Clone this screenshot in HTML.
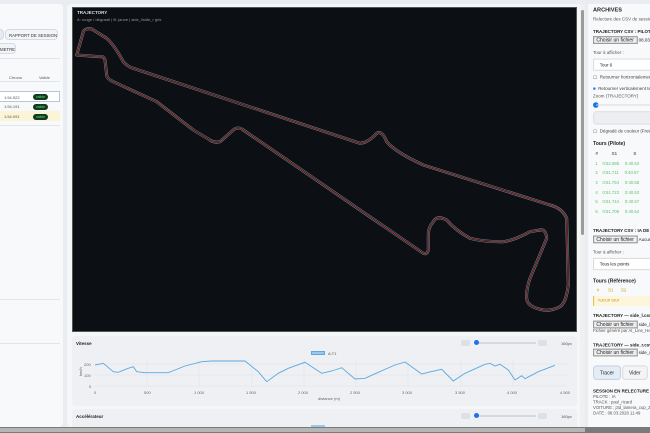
<!DOCTYPE html>
<html><head><meta charset="utf-8"><style>
*{margin:0;padding:0;box-sizing:border-box}
body{width:650px;height:433px;overflow:hidden;background:#e9ecf0;font-family:"Liberation Sans",sans-serif;position:relative;color:#222}
.abs{position:absolute}
.t{font-size:4.5px;color:#555}
.b{font-weight:bold;color:#222}
.btn{position:absolute;border:1px solid #d5d9e0;border-radius:4px;background:#f2f4f7;font-size:4.3px;color:#333;padding:3px 3px;white-space:nowrap}
.badge{position:absolute;left:33px;width:15px;height:6px;border-radius:3px;background:#123a1e;color:#5fdc7a;font-size:3.5px;text-align:center;line-height:6px}
</style></head><body>
<div class="abs" style="left:0;top:4px;width:63px;height:423px;background:#f8f9fb;border-radius:0 4px 4px 0"></div>
<div class="btn" style="left:-4px;top:29px;width:7px;height:11px;background:#e6ecf5"></div>
<div class="btn" style="left:5px;top:29px;width:53px;height:11px">RAPPORT DE SESSION</div>
<div class="btn" style="left:-4px;top:43px;width:20px;height:11px">METRE</div>
<div class="abs" style="left:0;top:58px;width:60px;height:1px;background:#e2e5ea"></div>
<div class="abs t" style="left:9px;top:75px;font-size:4px">Chrono</div>
<div class="abs t" style="left:39px;top:75px;font-size:4px">Valide</div>
<div class="abs" style="left:0;top:81px;width:60px;height:1px;background:#e2e5ea"></div>
<div class="abs" style="left:-2px;top:91px;width:62px;height:11px;border:1px solid #b8c6d8;background:#fff"></div>
<div class="abs" style="left:0;top:111px;width:60px;height:10px;background:#fbf5d8"></div>
<div class="abs t" style="left:4px;top:95px;font-size:4px">1:54.522</div>
<div class="abs t" style="left:4px;top:104px;font-size:4px">1:54.191</div>
<div class="abs t" style="left:4px;top:114px;font-size:4px">1:54.091</div>
<div class="badge" style="top:94px">valide</div>
<div class="badge" style="top:104px">valide</div>
<div class="badge" style="top:114px">valide</div>
<div class="abs" style="left:0;top:125px;width:60px;height:1px;background:#e2e5ea"></div>
<div class="abs" style="left:0;top:299px;width:60px;height:1px;background:#e2e5ea"></div>
<div class="abs" style="left:0;top:343px;width:60px;height:1px;background:#e2e5ea"></div>
<div class="abs" style="left:67px;top:4px;width:518px;height:423px;background:#f4f6f8;border-radius:4px"></div>
<div class="abs" style="left:72px;top:7px;width:505px;height:325px;background:#0c0f14;border:1px solid #555"></div>
<div class="abs" style="left:77px;top:10px;font-size:4.5px;color:#ddd;font-weight:bold">TRAJECTORY</div>
<div class="abs" style="left:77px;top:17px;font-size:4px;color:#999">A: rouge / dégradé | B: jaune | side_l/side_r gris</div>
<svg class="abs" style="left:0;top:0" width="650" height="433">
<g fill="none" stroke-linejoin="round" stroke-linecap="round">
<path d="M76.7,55 L83.3,31.7 Q85,28 91.7,29 L106.7,38.3 Q115,46 123.3,61.7 Q128,67 133.3,68.3 L360,143.3 Q368,143 376.7,133.3 Q382,130 386.7,141.7 Q395,152 423.3,165 L550,205 Q562,208 566.7,218.3 L568.3,285 Q566,303 560,306.7 Q552,311 543.3,310 Q527,307 526.7,298.3 Q526,290 530,278.3 L546.7,238.3 Q546,229 540,230 L530,231.7 Q515,240 503.3,241.7 Q485,242 470,238.3 Q455,230 446.7,220 Q437,215 433.3,221.7 Q428,228 428.3,235 L428.3,250 Q427,255 423.3,253.3 L243.3,130 Q238,126 233.3,130 L220,141.7 Q214,143 210,140 L193.3,130 L156.7,101.7 L113.3,81.7 Q107,79 106.7,75 L105,60 Q104,56 100,56.7 Z" stroke="#7d828c" stroke-width="3"/>
<path d="M76.7,55 L83.3,31.7 Q85,28 91.7,29 L106.7,38.3 Q115,46 123.3,61.7 Q128,67 133.3,68.3 L360,143.3 Q368,143 376.7,133.3 Q382,130 386.7,141.7 Q395,152 423.3,165 L550,205 Q562,208 566.7,218.3 L568.3,285 Q566,303 560,306.7 Q552,311 543.3,310 Q527,307 526.7,298.3 Q526,290 530,278.3 L546.7,238.3 Q546,229 540,230 L530,231.7 Q515,240 503.3,241.7 Q485,242 470,238.3 Q455,230 446.7,220 Q437,215 433.3,221.7 Q428,228 428.3,235 L428.3,250 Q427,255 423.3,253.3 L243.3,130 Q238,126 233.3,130 L220,141.7 Q214,143 210,140 L193.3,130 L156.7,101.7 L113.3,81.7 Q107,79 106.7,75 L105,60 Q104,56 100,56.7 Z" stroke="#0c0f14" stroke-width="1.9"/>
<path d="M76.7,55 L83.3,31.7 Q85,28 91.7,29 L106.7,38.3 Q115,46 123.3,61.7 Q128,67 133.3,68.3 L360,143.3 Q368,143 376.7,133.3 Q382,130 386.7,141.7 Q395,152 423.3,165 L550,205 Q562,208 566.7,218.3 L568.3,285 Q566,303 560,306.7 Q552,311 543.3,310 Q527,307 526.7,298.3 Q526,290 530,278.3 L546.7,238.3 Q546,229 540,230 L530,231.7 Q515,240 503.3,241.7 Q485,242 470,238.3 Q455,230 446.7,220 Q437,215 433.3,221.7 Q428,228 428.3,235 L428.3,250 Q427,255 423.3,253.3 L243.3,130 Q238,126 233.3,130 L220,141.7 Q214,143 210,140 L193.3,130 L156.7,101.7 L113.3,81.7 Q107,79 106.7,75 L105,60 Q104,56 100,56.7 Z" stroke="#c0443e" stroke-width="0.7"/>
</g>
</svg>
<div class="abs" style="left:72px;top:336px;width:505px;height:70px;background:#eef0f3;border-radius:4px"></div>
<div class="abs b" style="left:76px;top:341px;font-size:4.5px">Vitesse</div>
<div class="abs" style="left:461px;top:340px;width:9px;height:6px;background:#dde0e5;border-radius:2px"></div>
<div class="abs" style="left:538px;top:340px;width:9px;height:6px;background:#dde0e5;border-radius:2px"></div>
<div class="abs" style="left:476px;top:342px;width:60px;height:2px;background:#d5d8de"></div>
<div class="abs" style="left:474px;top:340px;width:5px;height:5px;border-radius:50%;background:#1a73e8"></div>
<div class="abs t" style="left:561px;top:341px;font-size:4px">160px</div>
<div class="abs" style="left:311px;top:351px;width:14px;height:4px;background:#9cc8ec;border:1px solid #5aa9e6"></div>
<div class="abs t" style="left:328px;top:351px;font-size:4px">A:T1</div>
<div class="abs" style="left:72px;top:409px;width:505px;height:20px;background:#eef0f3;border-radius:4px"></div>
<div class="abs b" style="left:76px;top:414px;font-size:4.5px">Accélérateur</div>
<div class="abs" style="left:461px;top:413px;width:9px;height:6px;background:#dde0e5;border-radius:2px"></div>
<div class="abs" style="left:538px;top:413px;width:9px;height:6px;background:#dde0e5;border-radius:2px"></div>
<div class="abs" style="left:476px;top:415px;width:60px;height:2px;background:#d5d8de"></div>
<div class="abs" style="left:474px;top:413px;width:5px;height:5px;border-radius:50%;background:#1a73e8"></div>
<div class="abs t" style="left:561px;top:414px;font-size:4px">160px</div>
<div class="abs" style="left:311px;top:425px;width:14px;height:4px;background:#9cc8ec"></div>
<svg class="abs" style="left:0;top:0" width="650" height="433">
<g stroke="#dfe2e6" stroke-width="0.5">
<line x1="95" y1="364" x2="567" y2="364"/><line x1="95" y1="375" x2="567" y2="375"/><line x1="95" y1="386" x2="567" y2="386"/>
<line x1="147" y1="359" x2="147" y2="387"/><line x1="199" y1="359" x2="199" y2="387"/><line x1="252" y1="359" x2="252" y2="387"/><line x1="304" y1="359" x2="304" y2="387"/><line x1="356" y1="359" x2="356" y2="387"/><line x1="408" y1="359" x2="408" y2="387"/><line x1="461" y1="359" x2="461" y2="387"/><line x1="513" y1="359" x2="513" y2="387"/>
</g>
<polyline fill="none" stroke="#5aa9e0" stroke-width="0.9" points="95,365 103.3,363.3 113.3,371.7 118.3,372.3 128.3,368.3 133.3,366.7 136.7,371.7 145,372.7 168.3,372.7 175,370 185,366 201.7,361.7 211.7,361 245,361 258.3,371.7 266.7,381.7 278.3,373.3 288.3,368.3 305,362.3 321.7,373.3 331.7,371 341.7,367.7 355,379 365,378.3 378.3,372.3 395,365 405,362 421.7,374 428.3,372.3 441.7,369.3 453.3,381 465,373.3 485,364.3 490,363.3 495,366 500,364.3 508.3,370 515,380 521.7,375.7 525,378.7 538.3,371.7 555,365.3"/>
<g font-size="4" fill="#666" font-family="Liberation Sans">
<text x="84" y="366">200</text><text x="84" y="377">100</text><text x="89" y="388">0</text>
<text x="80" y="378" transform="rotate(-90 80 376)">km/h</text>
<text x="94" y="394">0</text><text x="144" y="394">500</text><text x="194" y="394">1 000</text><text x="246" y="394">1 500</text><text x="298" y="394">2 000</text><text x="350" y="394">2 500</text><text x="402" y="394">3 000</text><text x="455" y="394">3 500</text><text x="507" y="394">4 000</text><text x="560" y="394">4 500</text>
<text x="318" y="400">distance (m)</text>
</g>
</svg>
<div class="abs" style="left:580px;top:4px;width:5px;height:423px;background:#f0f0f0"></div>
<div class="abs" style="left:581px;top:10px;width:3px;height:225px;background:#9a9a9a;border-radius:2px"></div>
<div class="abs" style="left:588px;top:4px;width:62px;height:423px;background:#f8f9fb"></div>
<div style="position:absolute;left:593px;top:7px;font-size:4.5px;line-height:1.2;width:60px;white-space:nowrap;transform:scale(1.12);transform-origin:0 0">
<div class="b" style="font-size:5px">ARCHIVES</div>
<div class="t" style="margin-top:3px;font-size:4px">Relecture des CSV de sessions a</div>
<div class="b" style="margin-top:6px;font-size:4px">TRAJECTORY CSV : PILOTE</div>
<div style="margin-top:2px"><span style="border:1px solid #999;background:#eee;padding:0 2px;font-size:4.5px">Choisir un fichier</span> <span style="font-size:4px">08.03.20</span></div>
<div class="t" style="margin-top:7px;font-size:4px">Tour à afficher :</div>
<div style="margin-top:2px;border:1px solid #ddd;background:#fff;height:11px;padding:3px 5px;font-size:4px">Tour 6</div>
<div style="margin-top:4px;font-size:4px;color:#444">▢ &nbsp;Retourner horizontalemen</div>
<div style="margin-top:5px;font-size:4px;color:#444"><span style="color:#1a73e8">■</span> &nbsp;Retourner verticalement te</div>
<div class="t" style="margin-top:2px;font-size:4px">Zoom (TRAJECTORY)</div>
<div style="margin-top:2px;height:4px;position:relative"><div style="position:absolute;left:0;top:0;width:5px;height:5px;border-radius:50%;background:#1a73e8"></div><div style="position:absolute;left:3px;top:2px;width:60px;height:1.5px;background:#ddd"></div></div>
<div style="margin-top:4px;height:12px;background:#eceef1;border:1px solid #e0e0e0;border-radius:3px"></div>
<div style="margin-top:4px;font-size:4px;color:#444">▢ &nbsp;Dégradé de couleur (Frein</div>
<div class="b" style="margin-top:6px;font-size:4.5px">Tours (Pilote)</div>
<div style="margin-top:4px;font-size:4px;color:#333">&nbsp;&nbsp;#&nbsp;&nbsp;&nbsp;&nbsp;&nbsp;&nbsp;&nbsp;&nbsp;&nbsp;&nbsp;&nbsp;S1&nbsp;&nbsp;&nbsp;&nbsp;&nbsp;&nbsp;&nbsp;&nbsp;&nbsp;&nbsp;&nbsp;&nbsp;&nbsp;S</div>
<div style="color:#5cc46a;font-size:3.8px;line-height:8.7px;margin-top:2px">
<div>&nbsp;&nbsp;1&nbsp;&nbsp;&nbsp;&nbsp;0:52.088&nbsp;&nbsp;&nbsp;&nbsp;&nbsp;0:40.53</div>
<div>&nbsp;&nbsp;2&nbsp;&nbsp;&nbsp;&nbsp;0:51.711&nbsp;&nbsp;&nbsp;&nbsp;&nbsp;0:40.57</div>
<div>&nbsp;&nbsp;3&nbsp;&nbsp;&nbsp;&nbsp;0:51.754&nbsp;&nbsp;&nbsp;&nbsp;&nbsp;0:40.56</div>
<div>&nbsp;&nbsp;4&nbsp;&nbsp;&nbsp;&nbsp;0:51.723&nbsp;&nbsp;&nbsp;&nbsp;&nbsp;0:40.53</div>
<div>&nbsp;&nbsp;5&nbsp;&nbsp;&nbsp;&nbsp;0:51.744&nbsp;&nbsp;&nbsp;&nbsp;&nbsp;0:40.57</div>
<div>&nbsp;&nbsp;6&nbsp;&nbsp;&nbsp;&nbsp;0:51.708&nbsp;&nbsp;&nbsp;&nbsp;&nbsp;0:40.54</div>
</div>
<div class="b" style="margin-top:10px;font-size:4px">TRAJECTORY CSV : IA DE RÉFÉ</div>
<div style="margin-top:2px"><span style="border:1px solid #999;background:#eee;padding:0 2px">Choisir un fichier</span> <span style="font-size:4px">Aucun f</span></div>
<div class="t" style="margin-top:7px;font-size:4px">Tour à afficher :</div>
<div style="margin-top:2px;border:1px solid #ddd;background:#fff;height:11px;padding:3px 5px;font-size:4px">Tous les points</div>
<div class="b" style="margin-top:7px;font-size:4.5px">Tours (Référence)</div>
<div style="margin-top:3px;font-size:4px;color:#d4a017">&nbsp;&nbsp;&nbsp;#&nbsp;&nbsp;&nbsp;&nbsp;&nbsp;&nbsp;&nbsp;S1&nbsp;&nbsp;&nbsp;&nbsp;&nbsp;&nbsp;S2</div>
<div style="margin-top:3px;border-left:1.5px solid #e8c440;background:#fdf6dc;height:9px;padding:2px 3px;font-size:4px;color:#c89a20">Aucun tour</div>
<div class="b" style="margin-top:7px;font-size:4px">TRAJECTORY — side_l.csv (bo</div>
<div style="margin-top:2px"><span style="border:1px solid #999;background:#eee;padding:0 2px">Choisir un fichier</span> <span style="font-size:4px">side_l.c</span></div>
<div class="t" style="font-size:3.8px">Fichier généré par AI_Line_Helpe</div>
<div class="b" style="margin-top:8px;font-size:4px">TRAJECTORY — side_r.csv (bo</div>
<div style="margin-top:2px"><span style="border:1px solid #999;background:#eee;padding:0 2px">Choisir un fichier</span> <span style="font-size:4px">side_r.c</span></div>
<div style="margin-top:8px"><span style="display:inline-block;border:1px solid #c8d4e4;background:#e4ecf6;border-radius:3px;padding:3px 5px">Tracer</span> <span style="display:inline-block;border:1px solid #ddd;background:#f3f4f6;border-radius:3px;padding:3px 5px">Vider</span></div>
<div class="b" style="margin-top:8px;font-size:4px">SESSION EN RELECTURE</div>
<div class="t" style="font-size:3.8px;line-height:1.3">PILOTE : IA<br>TRACK : paul_ricard<br>VOITURE : j3d_lamera_cup_2025<br>DATE : 08.03.2026 11:49</div>
</div>
<div class="abs" style="left:0;top:427px;width:650px;height:6px;background:#7a7a7a"></div>
<div class="abs" style="left:0;top:428px;width:585px;height:4px;background:#b5b5b5"></div>
</body></html>
